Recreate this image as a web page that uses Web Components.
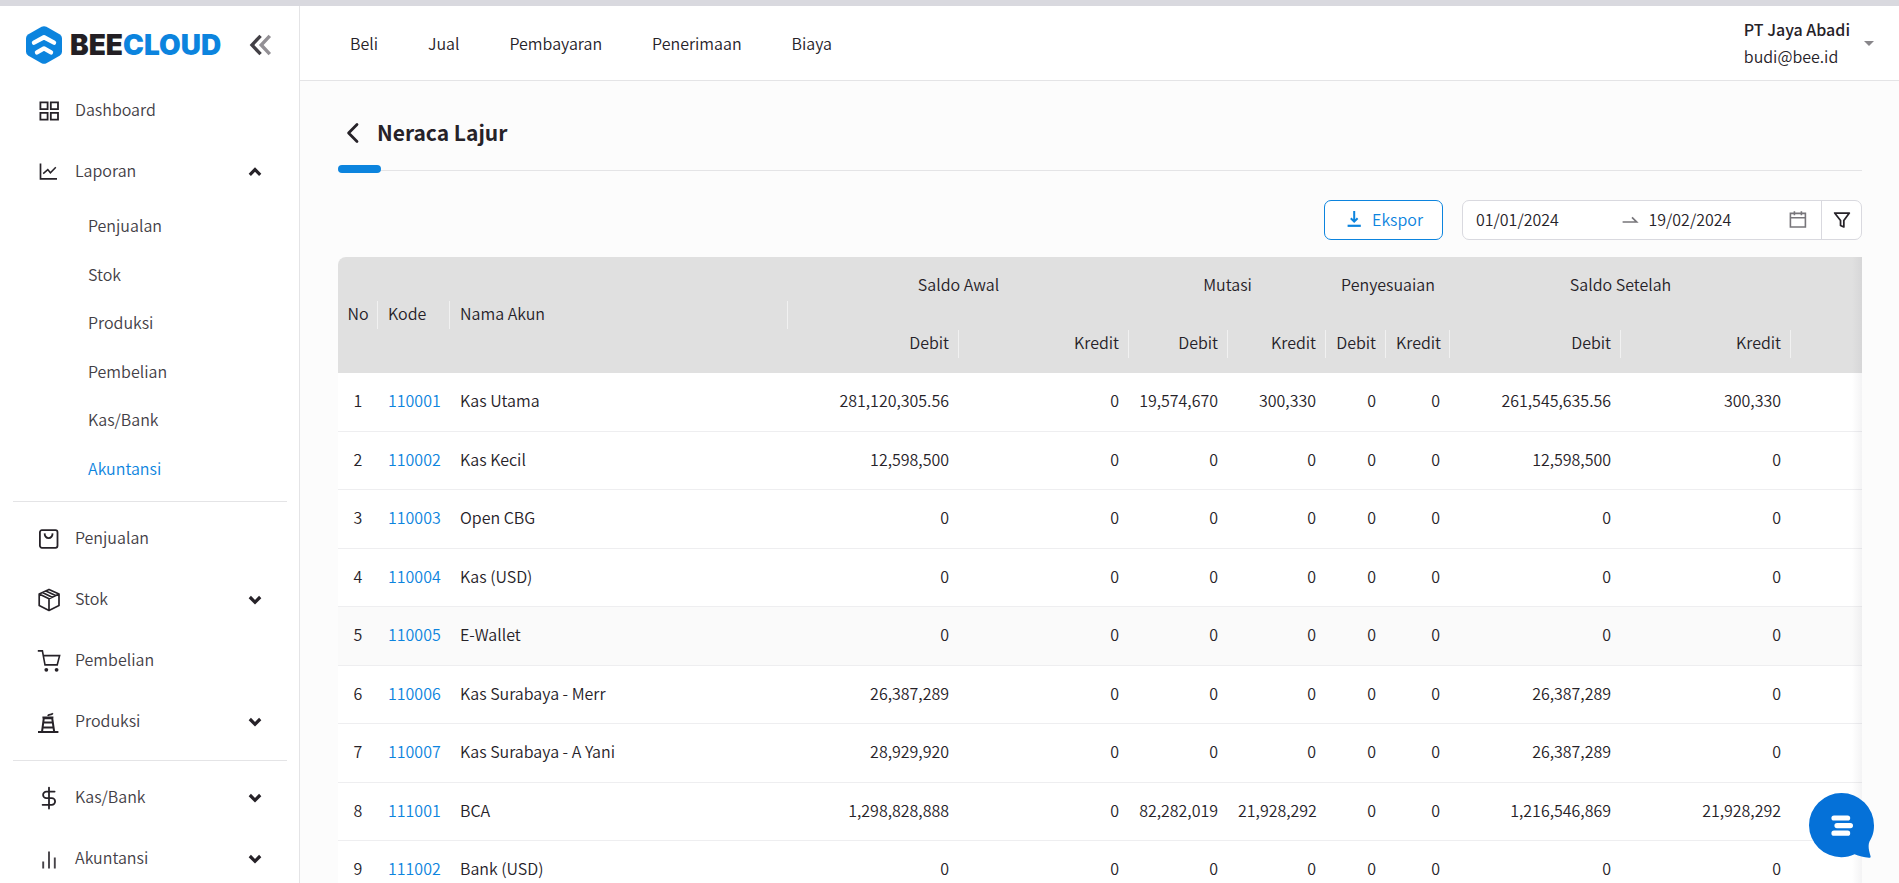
<!DOCTYPE html>
<html lang="id">
<head>
<meta charset="utf-8">
<title>Neraca Lajur - Beecloud</title>
<meta name="viewport" content="width=device-width, initial-scale=1">
<style>
  :root {
    --blue: #0c84de;
    --ink: #262228;
    --soft-ink: #434046;
    --line: #e4e4e6;
    --field-line: #d9d9df;
  }
  * { box-sizing: border-box; }
  body {
    margin: 0;
    color: var(--ink);
    background: #fcfcfc;
    font: 350 16px/24px "Noto Sans CJK SC", "Noto Sans CJK JP", "Noto Sans", sans-serif;
  }
</style>
</head>
<body>
<bee-app>
  <bee-sidebar slot="sidebar">
    <bee-nav-item icon="grid">Dashboard</bee-nav-item>
    <bee-nav-item icon="chart" toggle="open">Laporan</bee-nav-item>
    <bee-subnav>
      <bee-sub-item>Penjualan</bee-sub-item>
      <bee-sub-item>Stok</bee-sub-item>
      <bee-sub-item>Produksi</bee-sub-item>
      <bee-sub-item>Pembelian</bee-sub-item>
      <bee-sub-item>Kas/Bank</bee-sub-item>
      <bee-sub-item current>Akuntansi</bee-sub-item>
    </bee-subnav>
    <bee-divider></bee-divider>
    <bee-nav-item icon="bag">Penjualan</bee-nav-item>
    <bee-nav-item icon="box" toggle="closed">Stok</bee-nav-item>
    <bee-nav-item icon="cart">Pembelian</bee-nav-item>
    <bee-nav-item icon="factory" toggle="closed">Produksi</bee-nav-item>
    <bee-divider></bee-divider>
    <bee-nav-item icon="dollar" toggle="closed">Kas/Bank</bee-nav-item>
    <bee-nav-item icon="bars" toggle="closed">Akuntansi</bee-nav-item>
  </bee-sidebar>
  <bee-topbar slot="topbar" company="PT Jaya Abadi" email="budi@bee.id"></bee-topbar>
  <bee-page-title>Neraca Lajur</bee-page-title>
  <bee-toolbar>
    <bee-export-button>Ekspor</bee-export-button>
    <bee-date-filter from="01/01/2024" to="19/02/2024"></bee-date-filter>
  </bee-toolbar>
  <bee-ledger></bee-ledger>
</bee-app>
<bee-chat></bee-chat>

<script>
const BASE = '<style>*{box-sizing:border-box}a{color:inherit;text-decoration:none}button,input{font:inherit;color:inherit;background:none;border:0;padding:0;margin:0}button{cursor:pointer}</style>';

function define(name, render) {
  customElements.define(name, class extends HTMLElement {
    constructor() {
      super();
      this.attachShadow({ mode: 'open' });
    }
    connectedCallback() {
      this.shadowRoot.innerHTML = BASE + render(this);
    }
  });
}

/* 24-unit icons, drawn with the current colour */
const ICONS = {
  grid: '<g stroke-width="1.8"><path d="M3.4 3.4h7.2v6.8H3.4zM13.8 3.4H21v6.8h-7.2zM3.4 13.8h7.2v6.8H3.4zM13.8 13.8H21v6.8h-7.2z"/></g>',
  chart: '<path stroke-width="1.7" d="M3.5 3.6v15.2H20"/><path stroke-width="1.5" d="M6.2 13.6L10.8 9.6l2.6 3.2L18.8 7.2"/>',
  bag: '<rect x="2.9" y="3.2" width="17.6" height="17.6" rx="2" stroke-width="1.8"/><path stroke-width="1.8" d="M7.6 6.4c.4 6.2 7.6 6.2 8 0"/>',
  box: '<path stroke-width="1.7" stroke-linejoin="round" d="M12 1.4L22 6v11.6L12 22.4 2.2 17.6V6zM2.2 6L12 10.8 22 6M12 10.8v11.6M8.8 3l9.8 4.6M5.4 4.6l9.8 4.6"/>',
  cart: '<path stroke-width="1.6" d="M.8 1.9h4.6l2.6 14h12.2L22.6 6.6H6.2"/><g fill="currentColor" stroke="none"><circle cx="9.3" cy="20.8" r="1.9"/><circle cx="19.6" cy="20.8" r="1.9"/></g>',
  factory: '<path stroke-width="2" d="M1 22h20.4M5 22L6.8 8.2h8.4L17.2 22M5.4 7.6h11M6.2 12.6h9.6M5.6 17.4h10.8"/><path stroke-width="1.7" d="M10.8 5.8c1-2 3.6-.4 5-2.6"/>',
  dollar: '<path stroke-width="1.8" stroke-linecap="round" stroke-linejoin="round" d="M12 1.6v21M17.6 5.6H9.4a3.3 3.3 0 0 0 0 6.6h5.4a3.3 3.3 0 0 1 0 6.6H5.6"/>',
  bars: '<path stroke-width="1.9" opacity=".85" d="M6.2 21.4v-6.8M12 21.4V4.6M17.8 21.4v-11"/>',
  up: '<path stroke-width="3.2" d="M6.8 14.8L12 9.6l5.2 5.2"/>',
  down: '<path stroke-width="3.2" d="M6.8 9L12 14.2 17.2 9"/>',
  collapse: '<g stroke-width="3.4"><path d="M12.6 2.8L4 12l8.6 9.2"/><path stroke="#939095" d="M21.8 2.8L13.2 12l8.6 9.2"/></g>',
  back: '<path stroke-width="2.8" stroke-linecap="round" stroke-linejoin="round" d="M16 4.4L7.6 13l8.400 8.400"/>',
  download: '<path stroke-width="2.2" d="M5.6 18.8h13.2"/><path stroke-width="2" d="M12.2 4v10.6M8.8 11.2l3.4 3.4 3.4-3.4"/>',
  arrow: '<path stroke="#77757a" stroke-width="1.7" d="M5.600 15h14l-4.6-4.6"/>',
  calendar: '<path stroke="#77757a" stroke-width="1.6" d="M4.4 6.4h15v13.6h-15zM4.4 10.8h15M8.4 4.2v4M15.4 4.2v4"/>',
  filter: '<path stroke-width="1.9" stroke-linejoin="round" d="M4 4.4h16l-6 8.2v7l-3.6-1.6v-5.4z"/>'
};
define('bee-icon', el => `
  <style>:host{display:block;flex:none;width:24px;height:24px}svg{display:block;width:100%;height:100%}</style>
  <svg viewBox="0 0 24 24" fill="none" stroke="currentColor" aria-hidden="true">${ICONS[el.getAttribute('name')]}</svg>`);

define('bee-app', () => `
  <style>
    :host{display:grid;grid-template-columns:300px minmax(0,1fr);height:100vh;border-top:6px solid #d9d9df}
    .main{display:flex;flex-direction:column;min-width:0;min-height:0}
    main{flex:1;min-height:0;overflow-y:auto;scrollbar-width:none;padding:32px 37px 0 38px}
  </style>
  <slot name="sidebar"></slot>
  <div class="main"><slot name="topbar"></slot><main><slot></slot></main></div>`);

define('bee-logo', () => `
  <style>
    :host{display:flex;align-items:center;gap:8px}
    svg{display:block;width:36px;height:38px}
    .word{font:900 28px/32px Inter,sans-serif;color:#231f24}
    .word span{color:var(--blue)}
  </style>
  <svg viewBox="0 0 36 38" aria-hidden="true">
    <path fill="#0c84de" d="M15.6.8q2.4-1.3 4.8 0L33.6 8.2q2.4 1.4 2.4 4v13.6q0 2.6-2.4 4L20.4 37.2q-2.4 1.3-4.8 0L2.4 29.8Q0 28.4 0 25.8V12.2q0-2.6 2.4-4z"/>
    <path fill="none" stroke="#fff" stroke-width="4.4" stroke-linecap="round" stroke-linejoin="round" d="M8 16.6L18 11.2l10 5.4M11 26.4l7-4 7 4"/>
  </svg>
  <div class="word">BEE<span>CLOUD</span></div>`);

define('bee-sidebar', () => `
  <style>
    :host{display:block;background:#fff;border-right:1px solid var(--line);color:var(--soft-ink);overflow:hidden}
    header{display:flex;align-items:center;justify-content:space-between;height:73px;padding:4px 27px 0 26px}
  </style>
  <header><bee-logo></bee-logo><button aria-label="Ciutkan menu"><bee-icon name="collapse"></bee-icon></button></header>
  <nav><slot></slot></nav>`);

define('bee-nav-item', el => {
  const toggle = el.getAttribute('toggle');
  const inner = `<bee-icon name="${el.getAttribute('icon')}"></bee-icon><span><slot></slot></span>`;
  return `
  <style>
    :host{display:block}
    .row{display:flex;align-items:center;gap:14px;width:100%;height:61px;padding:0 32px 0 37px;text-align:left}
    span{flex:1;padding-bottom:1px}
    bee-icon{color:var(--ink);margin-top:3px}
  </style>` + (toggle
    ? `<button class="row" aria-expanded="${toggle === 'open'}">${inner}<bee-icon name="${toggle === 'open' ? 'up' : 'down'}"></bee-icon></button>`
    : `<a class="row" href="#">${inner}</a>`);
});

define('bee-subnav', () => `
  <style>:host{display:flex;flex-direction:column;justify-content:space-between;min-height:291px}</style><slot></slot>`);

define('bee-sub-item', () => `
  <style>:host{display:block}:host([current]){color:var(--blue)}a{display:block;padding:12px 32px 12px 88px}</style>
  <a href="#"><slot></slot></a>`);

define('bee-divider', () => `
  <style>:host{display:block;height:1px;margin:9px 12px 5px 13px;background:var(--line)}</style>`);

define('bee-topbar', el => `
  <style>
    :host{display:flex;align-items:center;justify-content:space-between;flex:none;height:75px;background:#fff;border-bottom:1px solid var(--line);padding:0 25px}
    nav{display:flex}
    nav a{padding:12px 25px}
    .user{display:flex;align-items:center;gap:14px;text-align:left;line-height:27px}
    b{display:block;font-weight:500}
    span{display:block}
    i{border:5px solid transparent;border-top-color:#88868a;border-bottom:0}
  </style>
  <nav>${['Beli', 'Jual', 'Pembayaran', 'Penerimaan', 'Biaya'].map(t => `<a href="#">${t}</a>`).join('')}</nav>
  <button class="user"><div><b>${el.getAttribute('company')}</b><span>${el.getAttribute('email')}</span></div><i></i></button>`);

define('bee-page-title', () => `
  <style>
    :host{display:block;position:relative;padding-bottom:18px;border-bottom:1px solid var(--line)}
    :host::after{content:"";position:absolute;left:0;bottom:-3px;width:43px;height:8px;border-radius:4px;background:var(--blue)}
    div{display:flex;align-items:center;gap:12px;padding:4px 0 5px 3px}
    h1{margin:0;font-size:21px;line-height:30px;font-weight:700}
  </style>
  <div><button aria-label="Kembali"><bee-icon name="back"></bee-icon></button><h1><slot></slot></h1></div>`);

define('bee-toolbar', () => `
  <style>:host{display:flex;justify-content:flex-end;gap:19px;padding:29px 0 17px}</style><slot></slot>`);

define('bee-export-button', () => `
  <style>
    :host{display:block}
    button{display:flex;align-items:center;gap:6px;height:40px;padding:0 19px 2px 17px;border:1px solid var(--blue);border-radius:7px;background:#fff;color:var(--blue)}
  </style>
  <button><bee-icon name="download"></bee-icon><slot></slot></button>`);

define('bee-date-filter', el => `
  <style>
    :host{display:flex;width:400px;height:40px;border:1px solid var(--field-line);border-radius:7px;background:#fff}
    .range{flex:1;display:flex;align-items:center;padding:0 11px 2px 13px}
    input{width:0;flex:1;min-width:0;outline:0}
    .range bee-icon:first-of-type{margin:0 8px 0 3px}
    button{display:grid;place-items:center;width:40px;border-left:1px solid var(--field-line)}
    button bee-icon{width:22px;height:22px}
  </style>
  <div class="range">
    <input type="text" aria-label="Tanggal mulai" value="${el.getAttribute('from')}">
    <bee-icon name="arrow"></bee-icon>
    <input type="text" aria-label="Tanggal akhir" value="${el.getAttribute('to')}">
    <bee-icon name="calendar"></bee-icon>
  </div>
  <button aria-label="Filter"><bee-icon name="filter"></bee-icon></button>`);

const ROWS = [
  ['110001', 'Kas Utama', '281,120,305.56', '0', '19,574,670', '300,330', '0', '0', '261,545,635.56', '300,330'],
  ['110002', 'Kas Kecil', '12,598,500', '0', '0', '0', '0', '0', '12,598,500', '0'],
  ['110003', 'Open CBG', '0', '0', '0', '0', '0', '0', '0', '0'],
  ['110004', 'Kas (USD)', '0', '0', '0', '0', '0', '0', '0', '0'],
  ['110005', 'E-Wallet', '0', '0', '0', '0', '0', '0', '0', '0'],
  ['110006', 'Kas Surabaya - Merr', '26,387,289', '0', '0', '0', '0', '0', '26,387,289', '0'],
  ['110007', 'Kas Surabaya - A Yani', '28,929,920', '0', '0', '0', '0', '0', '26,387,289', '0'],
  ['111001', 'BCA', '1,298,828,888', '0', '82,282,019', '21,928,292', '0', '0', '1,216,546,869', '21,928,292'],
  ['111002', 'Bank (USD)', '0', '0', '0', '0', '0', '0', '0', '0']
];
const COLS = [40, 72, 338, 171, 170, 99, 98, 60, 64, 171, 170];
const GROUPS = ['Saldo Awal', 'Mutasi', 'Penyesuaian', 'Saldo Setelah'];

define('bee-ledger', () => `
  <style>
    :host{display:block;position:relative}
    :host::after{content:"";position:absolute;inset:0 0 0 auto;width:10px;background:linear-gradient(to right,rgba(60,60,80,0),rgba(60,60,80,.06));pointer-events:none}
    .scroll{overflow-x:auto;scrollbar-width:none;border-radius:8px 0 0 0}
    table{width:100%;table-layout:fixed;border-spacing:0;background:#fff}
    th{font-weight:inherit}
    th,td{height:58px;padding:14px 10px 18px;text-align:right;white-space:nowrap}
    td{border-bottom:1px solid #eeeef0}
    tbody tr:nth-child(odd) td{height:59px}
    tbody tr:nth-child(5) td{background:#fafafa}
    td:first-child,th.group,th.no{text-align:center}
    td:nth-child(2),td:nth-child(3),th.left{text-align:left}
    th.no{padding-left:0;padding-right:0}
    thead{background:#e0e0e0}
    thead th[rowspan],thead tr:last-child th{background:linear-gradient(#f1f1f1,#f1f1f1) no-repeat right 50%/1px 28px}
    thead th.last{background:none}
    thead tr:last-child th{background-position:right 15px}
    td a{color:var(--blue)}
  </style>
  <div class="scroll"><table>
    <colgroup>${COLS.map(w => `<col style="width:${w}px">`).join('')}<col></colgroup>
    <thead>
      <tr><th class="no" rowspan="2">No</th><th class="left" rowspan="2">Kode</th><th class="left" rowspan="2">Nama Akun</th>
        ${GROUPS.map(g => `<th class="group" colspan="2">${g}</th>`).join('')}<th class="last" rowspan="2"></th></tr>
      <tr>${GROUPS.map(() => '<th>Debit</th><th>Kredit</th>').join('')}</tr>
    </thead>
    <tbody>${ROWS.map(([code, ...rest], i) => `<tr><td>${i + 1}</td><td><a href="#">${code}</a></td>${rest.map(v => `<td>${v}</td>`).join('')}<td></td></tr>`).join('')}</tbody>
  </table></div>`);

define('bee-chat', () => `
  <style>
    :host{position:fixed;right:25px;bottom:25px;width:65px;height:65px}
    button{display:block;width:100%;height:100%}
    svg{display:block}
  </style>
  <button aria-label="Buka obrolan"><svg viewBox="0 0 65 65" width="65" height="65">
    <path fill="#0571d8" d="M32.5 0A32.4 32.4 0 0 1 65 32.4c0 7.2-1.8 11.6-4.4 15.8-1.6 3.2-1.2 8 .9 14.8.4 1.4-.3 2-1.5 1.8-5-.6-10-1.6-14.4-3.6C41.4 63.2 37 64.2 32.5 64.2A32.2 32.2 0 0 1 0 32.2 32.4 32.4 0 0 1 32.5 0z"/>
    <g stroke="#fff" stroke-width="5.2" stroke-linecap="round"><path d="M25 25h13.6M28 32.6h13.4M25 40.2h13.6"/></g>
  </svg></button>`);
</script>
</body>
</html>
